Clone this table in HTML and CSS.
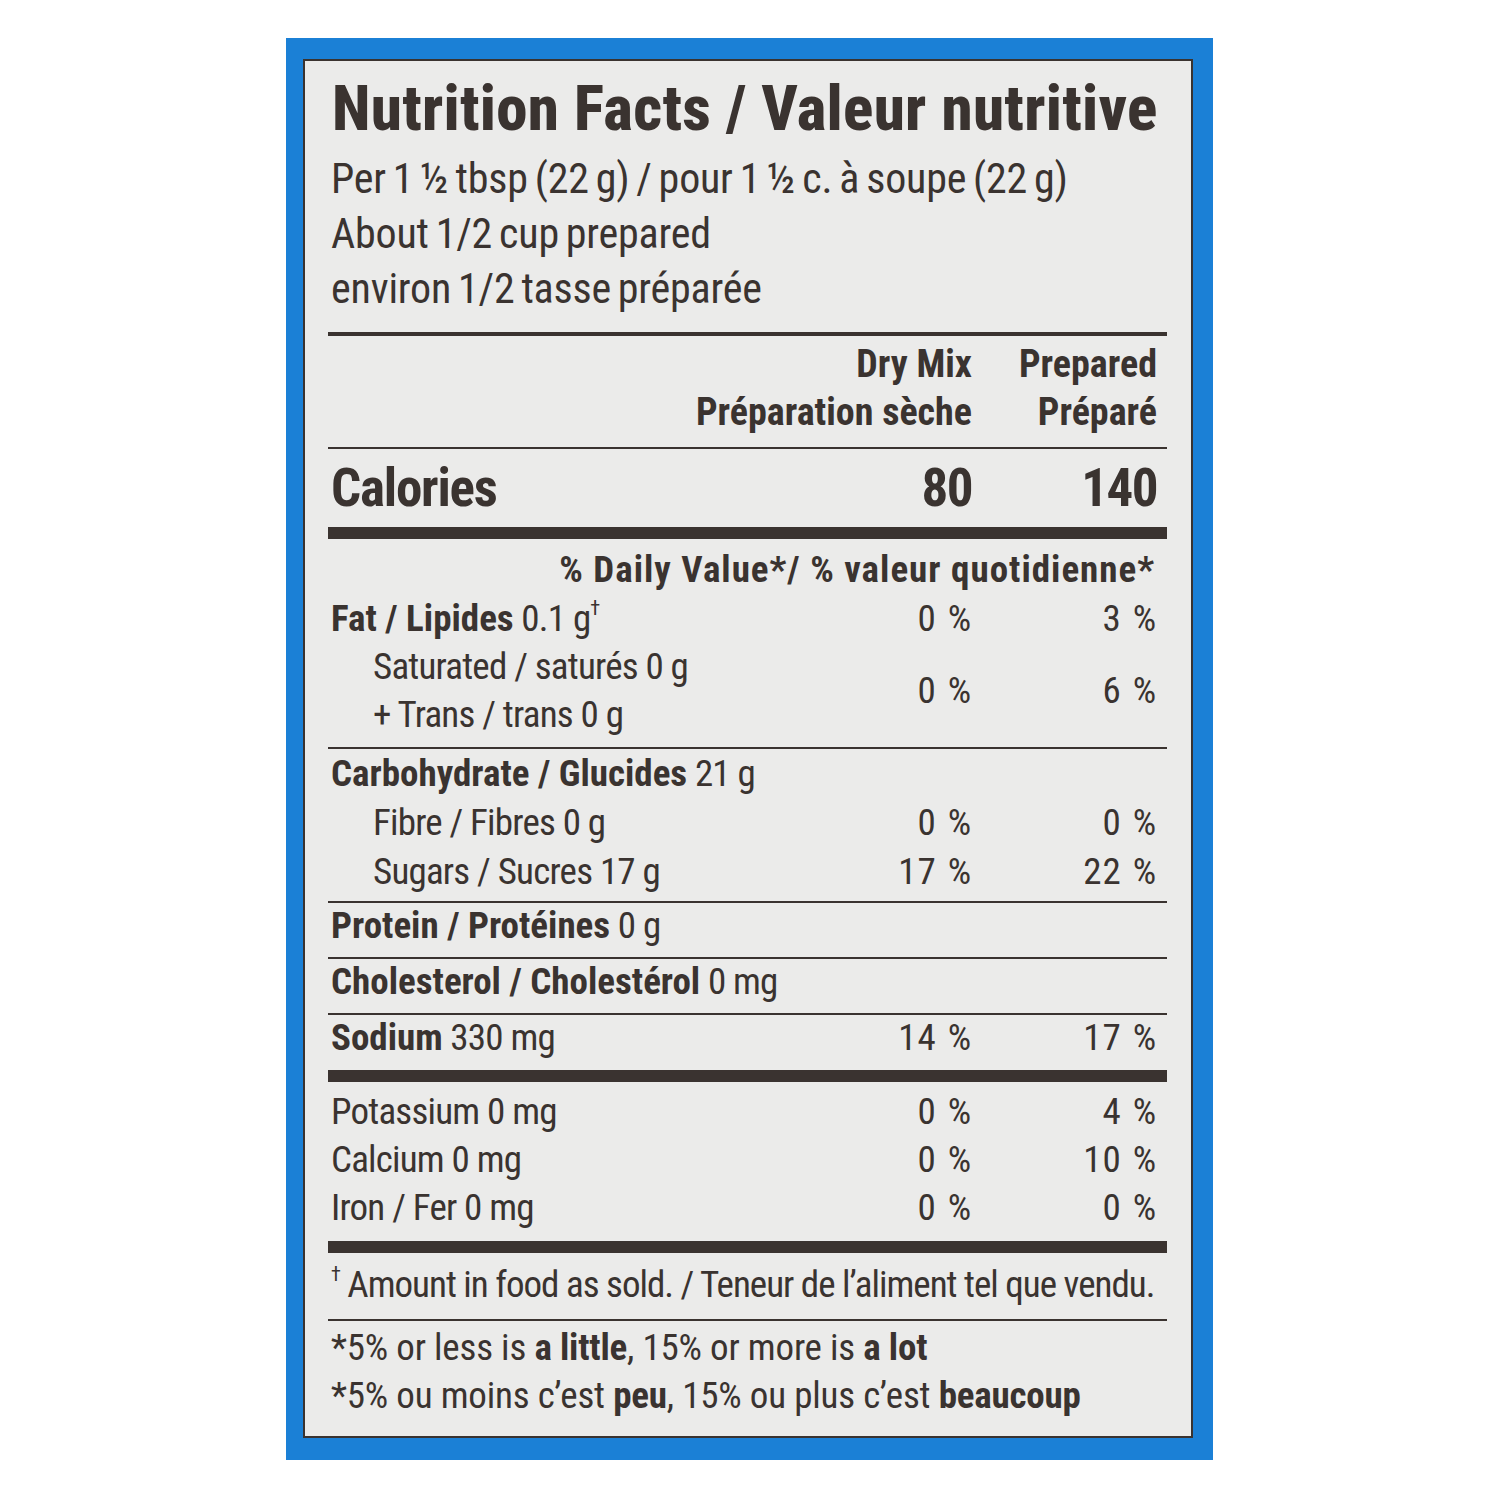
FILE: index.html
```html
<!DOCTYPE html>
<html lang="fr">
<head>
<meta charset="utf-8">
<title>Nutrition Facts / Valeur nutritive</title>
<link rel="stylesheet" href="styles.css">
</head>
<body>
<div class="frame">
  <section class="label">
    <h1 class="title">Nutrition Facts / Valeur nutritive</h1>
    <div class="serving">
      <div>Per 1 ½ tbsp (22 g) / pour 1 ½ c. à soupe (22 g)</div>
      <div>About 1/2 cup prepared</div>
      <div>environ 1/2 tasse préparée</div>
    </div>
    <hr class="rule rule-md rule-top">
    <div class="row head">
      <span></span>
      <span class="val">Dry Mix<br>Préparation sèche</span>
      <span class="val">Prepared<br>Préparé</span>
    </div>
    <hr class="rule rule-thin rule-head">
    <div class="row calories">
      <span>Calories</span>
      <span class="val">80</span>
      <span class="val">140</span>
    </div>
    <hr class="rule rule-thick rule-cal">
    <div class="dv">% Daily Value*/ % valeur quotidienne*</div>

    <div class="group fat">
      <span class="c1 r1 lbl"><b>Fat / Lipides</b> 0.1 g<sup>†</sup></span>
      <span class="c2 r1 val">0 %</span>
      <span class="c3 r1 val">3 %</span>
      <span class="c1 r2 lbl sub">Saturated / saturés 0 g</span>
      <span class="c1 r3 lbl sub">+ Trans / trans 0 g</span>
      <span class="c2 r23 val">0 %</span>
      <span class="c3 r23 val">6 %</span>
    </div>
    <hr class="rule rule-thin rule-fat">

    <div class="group carb">
      <div class="lbl pad"><b>Carbohydrate / Glucides</b> 21 g</div>
      <div class="row">
        <span class="lbl sub">Fibre / Fibres 0 g</span>
        <span class="val">0 %</span>
        <span class="val">0 %</span>
      </div>
      <div class="row">
        <span class="lbl sub">Sugars / Sucres 17 g</span>
        <span class="val">17 %</span>
        <span class="val">22 %</span>
      </div>
    </div>
    <hr class="rule rule-thin rule-carb">

    <div class="single lbl pad"><b>Protein / Protéines</b> 0 g</div>
    <hr class="rule rule-thin rule-single">
    <div class="single lbl pad"><b>Cholesterol / Cholestérol</b> 0 mg</div>
    <hr class="rule rule-thin rule-single">
    <div class="row single">
      <span class="lbl"><b>Sodium</b> 330 mg</span>
      <span class="val">14 %</span>
      <span class="val">17 %</span>
    </div>
    <hr class="rule rule-thick rule-sodium">

    <div class="minerals">
      <div class="row">
        <span class="lbl">Potassium 0 mg</span>
        <span class="val">0 %</span>
        <span class="val">4 %</span>
      </div>
      <div class="row">
        <span class="lbl">Calcium 0 mg</span>
        <span class="val">0 %</span>
        <span class="val">10 %</span>
      </div>
      <div class="row">
        <span class="lbl">Iron / Fer 0 mg</span>
        <span class="val">0 %</span>
        <span class="val">0 %</span>
      </div>
    </div>
    <hr class="rule rule-thick rule-min">

    <p class="foot"><sup>†</sup> Amount in food as sold. / Teneur de l’aliment tel que vendu.</p>
    <hr class="rule rule-thin rule-foot">
    <div class="legend">
      <p>*5% or less is <b>a little</b>, 15% or more is <b>a lot</b></p>
      <p>*5% ou moins c’est <b>peu</b>, 15% ou plus c’est <b>beaucoup</b></p>
    </div>
  </section>
</div>
</body>
</html>
```
FILE: styles.css
```css
* { box-sizing: border-box; }

html, body {
  margin: 0;
  padding: 0;
  background: #ffffff;
}

body {
  font-family: Roboto, "Liberation Sans", sans-serif;
  font-stretch: 75%;
  color: #3a3330;
}

.frame {
  margin: 38px 0 0 286px;
  width: 927px;
  height: 1422px;
  background: #1b80d6;
  padding: 21px 20px 22px 17px;
}

.label {
  width: 890px;
  height: 1379px;
  background: #ebebea;
  border: 2px solid #3a3330;
  padding: 17px 24px 0 23px;
  font-size: 37px;
  line-height: 48px;
  white-space: nowrap;
}

.title {
  margin: 0;
  font-size: 63px;
  line-height: 62px;
  font-weight: 800;
  letter-spacing: 0.3px;
  padding-left: 4px;
}

.serving {
  margin-top: 11px;
  padding-left: 3px;
  font-size: 42px;
  line-height: 55px;
  letter-spacing: -0.2px;
  word-spacing: -2.5px;
}

.rule {
  border: 0;
  margin: 0;
  background: #3a3330;
  display: block;
}
.rule-thin { height: 2px; }
.rule-md { height: 4px; }
.rule-thick { height: 12px; }

.rule-top { margin-top: 16px; }
.rule-head { margin-top: 11px; }
.rule-cal { margin-top: 6px; }
.rule-fat { margin-top: 8px; }
.rule-carb { margin-top: 5px; }
.rule-single { margin-top: 8px; }
.rule-sodium { margin-top: 9px; }
.rule-min { margin-top: 9px; }
.rule-foot { margin-top: 10px; }

.row {
  display: grid;
  grid-template-columns: minmax(0, 1fr) 290px 185px;
  padding: 0 10px 0 3px;
}

.pad { padding-left: 3px; }

.lbl { letter-spacing: -0.8px; }
.lbl b { letter-spacing: 0; }

.val {
  text-align: right;
  letter-spacing: 0.8px;
  word-spacing: 2px;
}

.head {
  margin-top: 4px;
  font-weight: 700;
  font-size: 38px;
}
.head .val {
  letter-spacing: 0;
  word-spacing: 0;
}

.calories {
  margin-top: 6px;
  font-size: 53px;
  line-height: 66px;
  font-weight: 700;
  letter-spacing: -1.2px;
}
.calories .val { letter-spacing: -1.5px; }

.dv {
  margin-top: 7px;
  font-weight: 700;
  text-align: right;
  padding-right: 12px;
  letter-spacing: 1px;
}

.group.fat {
  margin-top: 1px;
  display: grid;
  grid-template-columns: minmax(0, 1fr) 290px 185px;
  grid-template-rows: 48px 48px 48px;
  padding: 0 10px 0 3px;
}
.c1 { grid-column: 1; }
.c2 { grid-column: 2; }
.c3 { grid-column: 3; }
.r1 { grid-row: 1; }
.r2 { grid-row: 2; }
.r3 { grid-row: 3; }
.r23 { grid-row: 2 / 4; align-self: center; }

.sub { padding-left: 42px; }

sup {
  font-size: 0.55em;
  line-height: 0;
  vertical-align: 0.8em;
}

.carb { line-height: 49px; }

.single { line-height: 46px; }

.minerals { margin-top: 6px; }

.foot {
  margin: 8px 0 0;
  padding-left: 3px;
  letter-spacing: -1px;
}

.legend {
  margin-top: 3px;
  padding-left: 3px;
  letter-spacing: -0.2px;
}
.legend p { margin: 0; }
```
